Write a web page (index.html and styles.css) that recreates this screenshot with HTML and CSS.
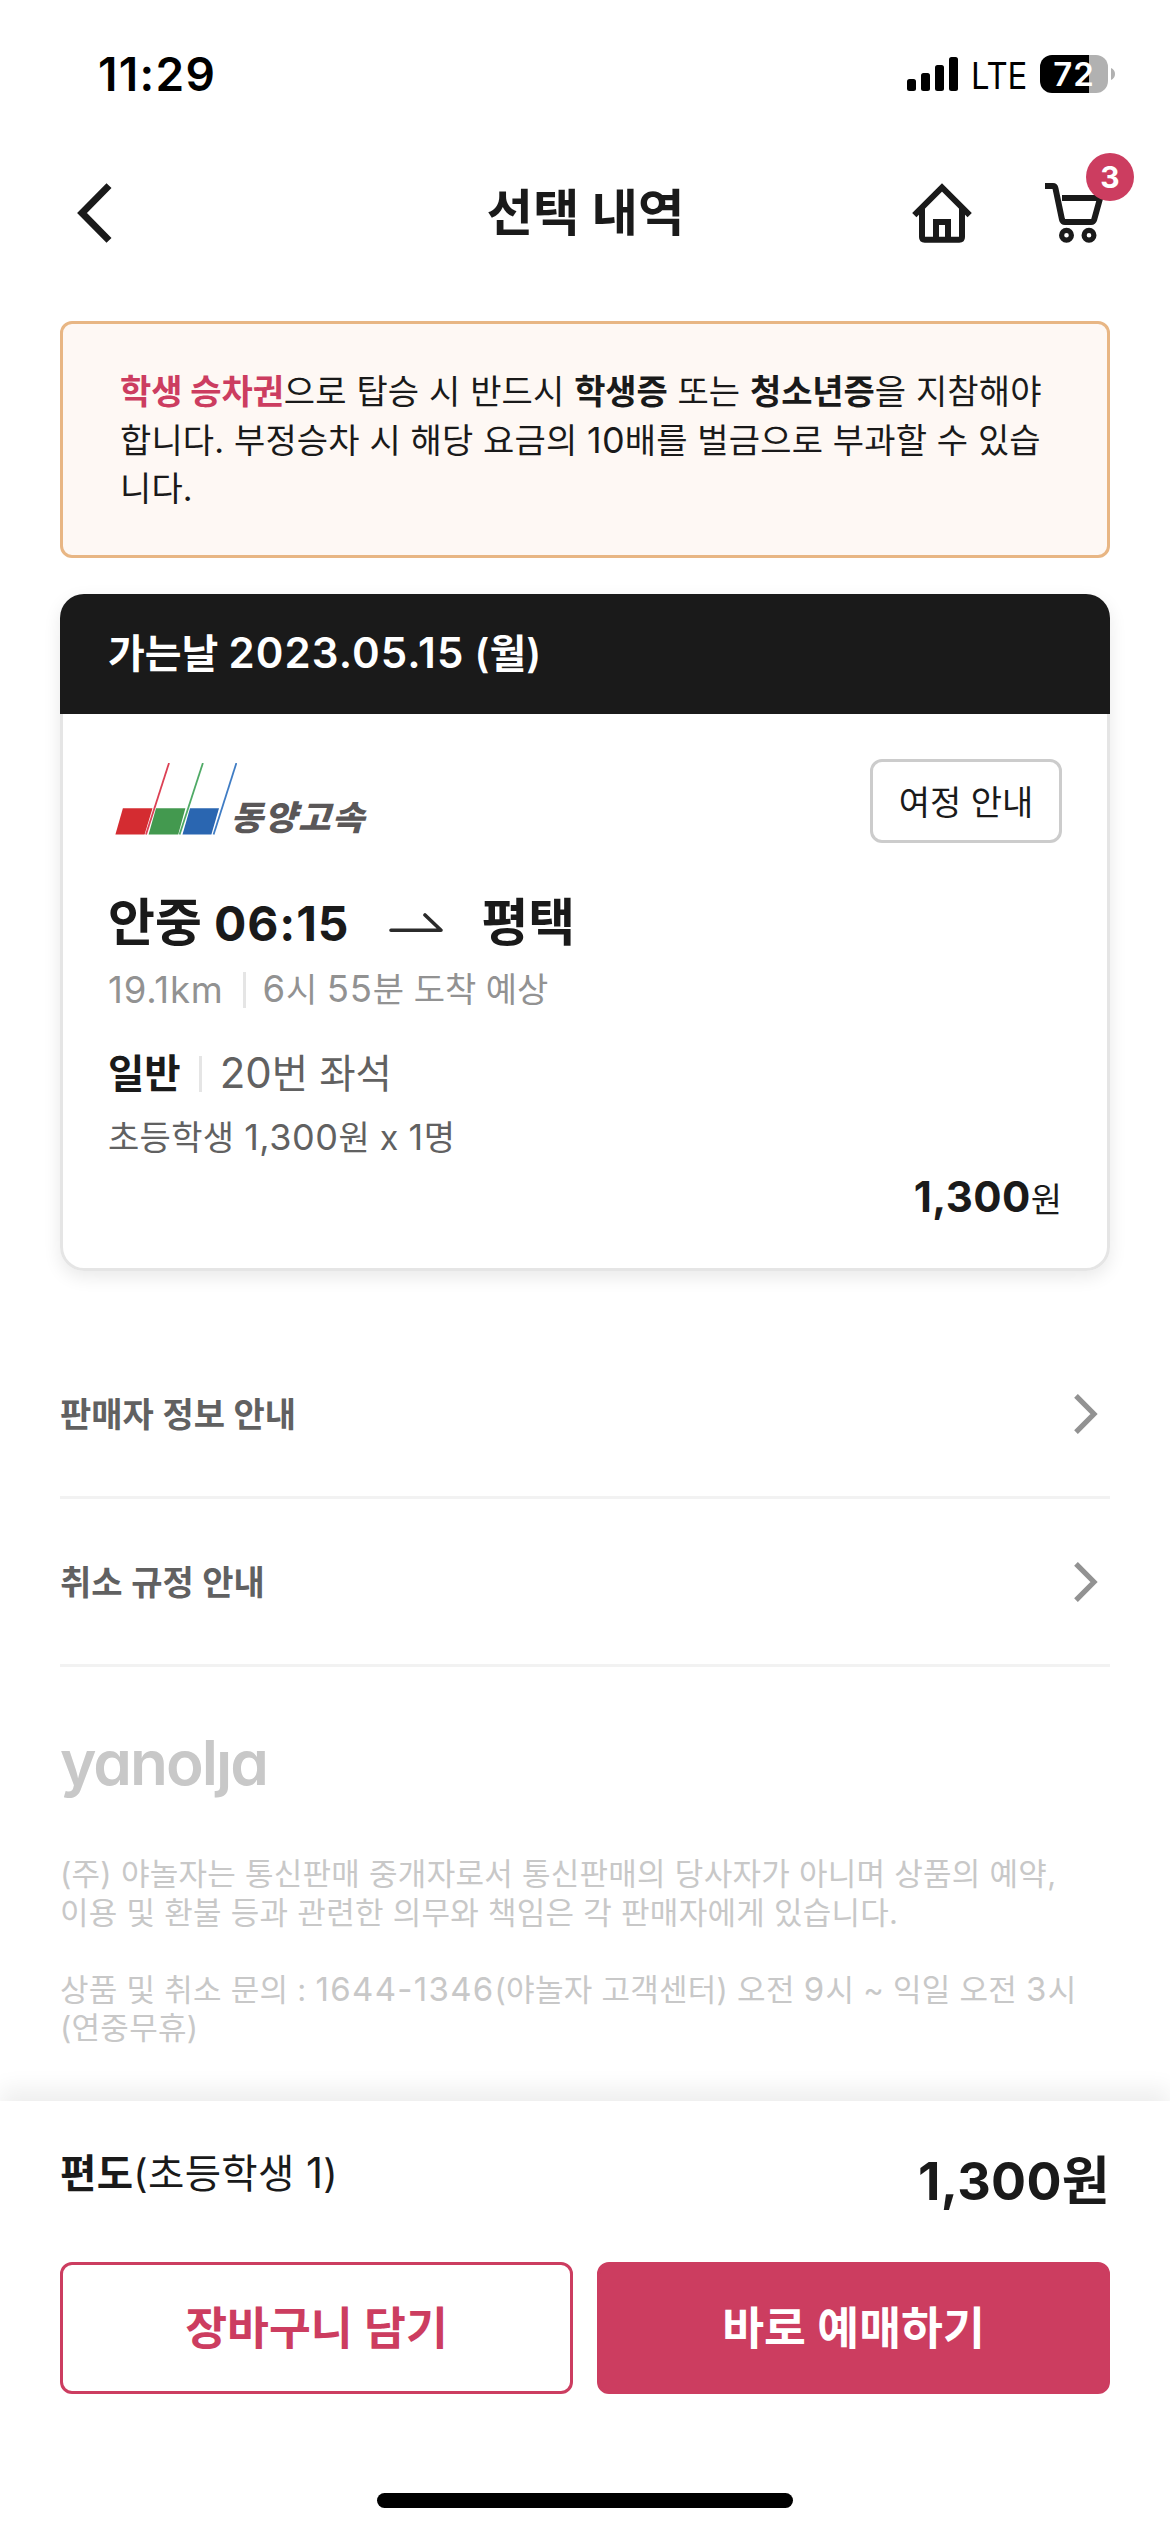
FILE: index.html
```html
<!DOCTYPE html>
<html lang="ko">
<head>
<meta charset="utf-8">
<meta name="viewport" content="width=device-width">
<title>선택 내역</title>
<link rel="stylesheet" href="styles.css">
</head>
<body>
<div class="screen">
  <div class="status">
    <span class="time">11:29</span>
    <div class="status-right">
      <svg class="signal" width="51" height="34" viewBox="0 0 51 34">
        <rect x="0" y="22" width="9" height="12" rx="2.5"/>
        <rect x="14" y="16" width="9" height="18" rx="2.5"/>
        <rect x="28" y="8" width="9" height="26" rx="2.5"/>
        <rect x="42" y="0" width="9" height="34" rx="2.5"/>
      </svg>
      <span class="network">LTE</span>
      <span class="battery">72</span>
      <svg class="nub" width="4" height="12" viewBox="0 0 4 12"><path d="M0 0Q4 1.8 4 6T0 12Z" fill="#b1b1b1"/></svg>
    </div>
  </div>

  <header class="header">
    <svg class="back" width="36" height="60" viewBox="0 0 36 60"><path d="M32 2.6 5 30 32 57.4" fill="none" stroke="#1a1a1a" stroke-width="7"/></svg>
    <h1 class="title">선택 내역</h1>
    <div class="header-icons">
      <svg width="60" height="60" viewBox="0 0 60 60" fill="none" stroke="#1a1a1a" stroke-width="6">
        <path d="M2.3 32.2 30 4.500 57.700 32.200"/>
        <path d="M10 25V54q0 2.700 2.700 2.700H47.300Q50 56.700 50 54V25"/>
        <path d="M24 56V39H36V56"/>
      </svg>
      <div class="cart">
        <svg width="60" height="60" viewBox="0 0 60 60" fill="none" stroke="#1a1a1a" stroke-width="6">
          <path d="M1 3H9Q11 3 11.500 5.500L18 36.500Q18.600 39 21 39H47Q49.500 39 50.200 36.500L57 12"/>
          <path d="M18 15H57"/>
          <circle cx="22.500" cy="52.300" r="4.900" stroke-width="5.200"/>
          <circle cx="45" cy="52.300" r="4.900" stroke-width="5.200"/>
        </svg>
        <span class="badge">3</span>
      </div>
    </div>
  </header>

  <main class="content">
    <p class="notice"><b class="pink">학생 승차권</b>으로 탑승 시 반드시 <b>학생증</b> 또는 <b>청소년증</b>을 지참해야<br>합니다. 부정승차 시 해당 요금의 <span class="num">10</span>배를 벌금으로 부과할 수 있습<br>니다.</p>

    <section class="card">
      <h2 class="card-head">가는날 <span class="num">2023.05.15</span> (월)</h2>
      <div class="card-body">
        <div class="operator">
          <div class="logo">
            <svg width="122" height="72" viewBox="0 0 122 72">
              <path d="M7.900 45.300H37.500L29.600 71.500H.4Z" fill="#d42c31"/>
              <path d="M41 45.300H70.400L63.200 71.500H33.600Z" fill="#43994f"/>
              <path d="M75 45.300H104L96.400 71.500H67.500Z" fill="#2a66b1"/>
              <path d="M54 0 31 71.500" stroke="#dc4054" stroke-width="1.800"/>
              <path d="M87.900 0 64.600 71.500" stroke="#4faa66" stroke-width="1.800"/>
              <path d="M121.400 0 98.600 71.500" stroke="#3f7cc4" stroke-width="1.800"/>
            </svg>
            <span class="logo-name">동양고속</span>
          </div>
          <button class="guide">여정 안내</button>
        </div>
        <div class="route">
          <span>안중 <span class="num">06:15</span></span>
          <svg class="arrow" width="54" height="20" viewBox="0 0 54 20"><path d="M2 17.300H52L36 2" fill="none" stroke="#2b2b2b" stroke-width="3.600" stroke-linecap="round" stroke-linejoin="round"/></svg>
          <span>평택</span>
        </div>
        <div class="meta">
          <span class="num">19.1km</span><i class="bar"></i><span><span class="num">6</span>시 <span class="num">55</span>분 도착 예상</span>
        </div>
        <div class="seat">
          <b>일반</b><i class="bar"></i><span><span class="num">20</span>번 좌석</span>
        </div>
        <div class="passenger">초등학생 <span class="num">1,300</span>원 x <span class="num">1</span>명</div>
        <div class="price"><b>1,300</b>원</div>
      </div>
    </section>

    <ul class="links">
      <li>판매자 정보 안내<svg width="24" height="40" viewBox="0 0 24 40"><path d="M2 1.800 20 20 2 38.200" fill="none" stroke="#929292" stroke-width="5.200"/></svg></li>
      <li>취소 규정 안내<svg width="24" height="40" viewBox="0 0 24 40"><path d="M2 1.800 20 20 2 38.200" fill="none" stroke="#929292" stroke-width="5.200"/></svg></li>
    </ul>

    <footer class="footer">
      <div class="brand">yanol<span class="brand-j">j</span>a</div>
      <p>(주) 야놀자는 통신판매 중개자로서 통신판매의 당사자가 아니며 상품의 예약,<br>이용 및 환불 등과 관련한 의무와 책임은 각 판매자에게 있습니다.</p>
      <p>상품 및 취소 문의 : <span class="num">1644-1346</span>(야놀자 고객센터) 오전 <span class="num">9</span>시 ~ 익일 오전 <span class="num">3</span>시<br>(연중무휴)</p>
    </footer>
  </main>

  <div class="checkout">
    <div class="total">
      <span class="trip"><b>편도</b>(초등학생 <span class="num">1</span>)</span>
      <strong class="sum">1,300원</strong>
    </div>
    <div class="actions">
      <button class="btn btn-line">장바구니 담기</button>
      <button class="btn btn-fill">바로 예매하기</button>
    </div>
    <div class="home-bar"></div>
  </div>
</div>
</body>
</html>
```
FILE: styles.css
```css
* { box-sizing: border-box; margin: 0; padding: 0; }
body {
  background: #fff;
  color: #1a1a1a;
  font-family: Inter, "Noto Sans CJK KR", sans-serif;
  white-space: nowrap;
}
b { font-weight: 700; }
svg { display: block; flex: none; }
button { font: inherit; color: inherit; background: #fff; }
ul { list-style: none; }
.num { line-height: 1; }
.screen { width: 1170px; height: 2532px; display: flex; flex-direction: column; overflow: hidden; }

/* status bar */
.status {
  height: 148px;
  padding: 0 55px 0 98px;
  display: flex;
  justify-content: space-between;
  align-items: center;
  color: #000;
}
.time { font-size: 46px; font-weight: 600; letter-spacing: 1.3px; }
.status-right { display: flex; align-items: center; }
.network {
  width: 62px;
  margin-left: 13px;
  padding-top: 3px;
  font-size: 36.500px;
  line-height: 40px;
  transform: scaleX(.9);
  transform-origin: 0 50%;
}
.battery {
  width: 68px;
  height: 38px;
  margin-left: 7px;
  border-radius: 12px;
  background: linear-gradient(to right, #000 49px, #b1b1b1 49px);
  color: #fff;
  font-size: 33px;
  font-weight: 600;
  line-height: 38px;
  letter-spacing: 1px;
  text-align: center;
}
.nub { margin-left: 3px; }

/* header */
.header {
  height: 130px;
  padding: 0 66px 0 77px;
  display: grid;
  grid-template-columns: 1fr auto 1fr;
  align-items: center;
}
.title { font-size: 50.500px; font-weight: 700; line-height: 60px; transform: translateX(-5px); }
.header-icons { display: flex; justify-content: flex-end; gap: 72px; }
.cart { position: relative; }
.badge {
  position: absolute;
  left: 42px;
  top: -30px;
  width: 48px;
  height: 48px;
  border-radius: 50%;
  background: #cc3d60;
  color: #fff;
  font-size: 30px;
  font-weight: 700;
  line-height: 48px;
  text-align: center;
}

/* notice */
.content { padding: 43px 60px 0; }
.notice {
  height: 237px;
  padding: 44px 57px 0;
  border: 3px solid #e8b684;
  border-radius: 12px;
  background: #fef8f4;
  font-size: 34px;
  line-height: 48.600px;
  letter-spacing: .15px;
}
.notice b { letter-spacing: -.1px; }
.notice .num { font-size: 36px; }
.pink { color: #cc3d60; }

/* trip card */
.card {
  margin-top: 36px;
  height: 677px;
  border-radius: 24px;
  box-shadow: 0 6px 18px rgba(0, 0, 0, .09);
}
.card-head {
  height: 120px;
  padding-left: 48px;
  border-radius: 24px 24px 0 0;
  background: #1a1a1a;
  color: #fff;
  font-size: 40px;
  font-weight: 600;
  line-height: 120px;
}
.card-head .num { font-size: 42px; letter-spacing: 1.100px; }
.card-body {
  height: 557px;
  padding: 45px 45px 0;
  border: 3px solid #e5e5e5;
  border-top: 0;
  border-radius: 0 0 24px 24px;
}
.operator { height: 84px; display: flex; justify-content: space-between; align-items: center; }
.logo { display: flex; align-items: flex-end; padding: 0 0 4px 7px; }
.logo-name {
  margin-left: -8px;
  color: #5a5758;
  font-size: 34px;
  font-weight: 900;
  line-height: 35px;
  letter-spacing: 1.200px;
  transform: skewX(-15deg) scaleX(1.040);
  transform-origin: 0 100%;
}
.guide {
  width: 192px;
  height: 84px;
  padding-bottom: 1px;
  border: 3px solid #ccc;
  border-radius: 12px;
  font-size: 34px;
}
.route {
  margin-top: 50px;
  display: flex;
  align-items: center;
  font-size: 51px;
  font-weight: 700;
  line-height: 60px;
}
.route .num { font-size: 48px; letter-spacing: .9px; }
.arrow { margin: 0 38px 0 40px; }
.meta, .seat { display: flex; align-items: center; line-height: 48px; }
.bar { width: 3px; height: 36px; background: #e5e5e5; }
.meta { margin-top: 13px; color: #929292; font-size: 34px; }
.meta .num { font-size: 36.500px; letter-spacing: .8px; }
.meta .bar { margin: 0 17px 0 19px; }
.seat { margin-top: 36px; color: #616161; font-size: 39.500px; }
.seat b { color: #1a1a1a; }
.seat .num { font-size: 42px; }
.seat .bar { margin: 0 18px; }
.passenger { margin-top: 19px; color: #616161; font-size: 34px; line-height: 42px; letter-spacing: .3px; }
.passenger .num { font-size: 36px; letter-spacing: .5px; }
.price { margin-top: 17px; text-align: right; font-size: 34px; line-height: 48px; }
.price b { font-size: 42px; letter-spacing: .4px; line-height: 1; }

/* links */
.links { margin-top: 60px; }
.links li {
  height: 168px;
  padding: 0 12px 2px 0;
  border-bottom: 3px solid #f2f2f2;
  display: flex;
  justify-content: space-between;
  align-items: center;
  color: #616161;
  font-size: 34px;
  font-weight: 600;
}
.links svg { transform: translateY(1px); }

/* footer */
.footer { color: #c8c8c8; font-size: 31px; line-height: 38.500px; letter-spacing: .26px; }
.footer p + p { margin-top: 38.500px; }
.footer .num { font-size: 33px; letter-spacing: 1.300px; }
.brand { margin: 60px 0 56px; font-size: 62px; font-weight: 600; line-height: 72px; letter-spacing: -2px; font-feature-settings: "cv11"; }
.brand-j { display: inline-block; clip-path: inset(25px -10px -10px -10px); }

/* checkout bar */
.checkout {
  margin-top: auto;
  height: 431px;
  padding: 41px 60px 0;
  background: #fff;
  box-shadow: 0 -12px 22px rgba(0, 0, 0, .07);
}
.total { height: 120px; display: flex; justify-content: space-between; align-items: flex-start; }
.trip { font-size: 39.500px; line-height: 64px; letter-spacing: .3px; }
.trip .num { font-size: 42px; }
.sum { padding-top: 8px; font-size: 52px; font-weight: 700; line-height: 64px; letter-spacing: .3px; }
.actions { display: grid; grid-template-columns: 1fr 1fr; gap: 24px; }
.btn { height: 132px; padding-bottom: 6px; border: 3px solid #cc3d60; border-radius: 12px; font-size: 45.500px; font-weight: 600; }
.btn-line { color: #cc3d60; }
.btn-fill { background: #cc3d60; color: #fff; }
.home-bar { width: 416px; height: 15px; margin: 99px auto 0; border-radius: 8px; background: #000; }
```
